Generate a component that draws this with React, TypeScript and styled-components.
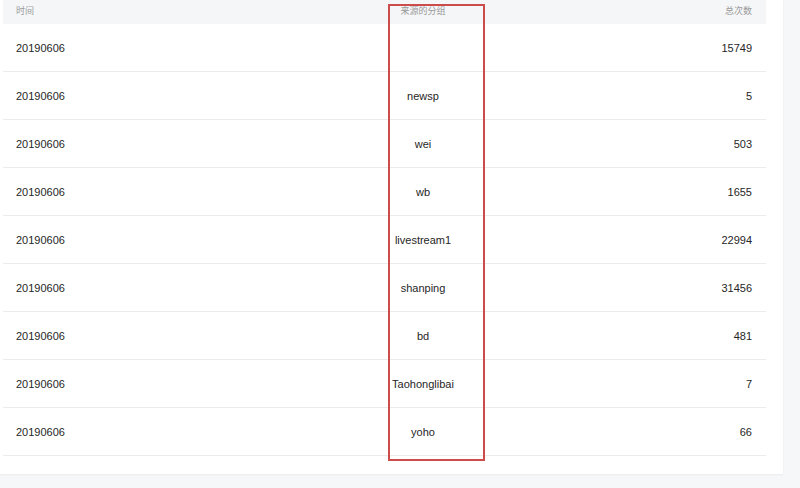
import React from "react";
import styled, { createGlobalStyle } from "styled-components";

const Global = createGlobalStyle`
  html, body { margin: 0; padding: 0; background: #f6f7f9; }
  body { font-family: "Liberation Sans", "Noto Sans CJK SC", Arial, sans-serif; }
`;

const Page = styled.div`
  position: relative;
  width: 800px;
  height: 488px;
  background: #f6f7f9;
  overflow: hidden;
`;

const Card = styled.div`
  width: 783px;
  padding-bottom: 18px;
  background: #ffffff;
  box-shadow: 0 1px 2px rgba(0, 0, 0, 0.05);
`;

const Table = styled.div`
  width: 763px;
  margin-left: 3px;
`;

const Row = styled.div<{ $head?: boolean }>`
  display: grid;
  grid-template-columns: 340px 160px 1fr;
  align-items: center;
  box-sizing: border-box;
  height: ${(p) => (p.$head ? "24px" : "48px")};
  padding-bottom: ${(p) => (p.$head ? "3px" : "0")};
  background: ${(p) => (p.$head ? "#f5f6f8" : "#ffffff")};
  border-bottom: ${(p) => (p.$head ? "none" : "1px solid #ececec")};
  color: ${(p) => (p.$head ? "#9a9a9a" : "#262626")};
  font-size: ${(p) => (p.$head ? "9px" : "11px")};
`;

const Cell = styled.div<{ $align: "left" | "center" | "right" }>`
  text-align: ${(p) => p.$align};
  padding-left: ${(p) => (p.$align === "left" ? "13px" : "0")};
  padding-right: ${(p) => (p.$align === "right" ? "14px" : "0")};
  white-space: nowrap;
`;

const Highlight = styled.div`
  position: absolute;
  left: 388px;
  top: 4px;
  width: 93px;
  height: 453px;
  border: 2px solid #cc4b4b;
  pointer-events: none;
`;

const rows: [string, string, string][] = [
  ["20190606", "", "15749"],
  ["20190606", "newsp", "5"],
  ["20190606", "wei", "503"],
  ["20190606", "wb", "1655"],
  ["20190606", "livestream1", "22994"],
  ["20190606", "shanping", "31456"],
  ["20190606", "bd", "481"],
  ["20190606", "Taohonglibai", "7"],
  ["20190606", "yoho", "66"],
];

export default function App() {
  return (
    <Page>
      <Global />
      <Card>
        <Table>
          <Row $head>
            <Cell $align="left">时间</Cell>
            <Cell $align="center">来源的分组</Cell>
            <Cell $align="right">总次数</Cell>
          </Row>
          {rows.map((r, i) => (
            <Row key={i}>
              <Cell $align="left">{r[0]}</Cell>
              <Cell $align="center">{r[1]}</Cell>
              <Cell $align="right">{r[2]}</Cell>
            </Row>
          ))}
        </Table>
      </Card>
      <Highlight />
    </Page>
  );
}
